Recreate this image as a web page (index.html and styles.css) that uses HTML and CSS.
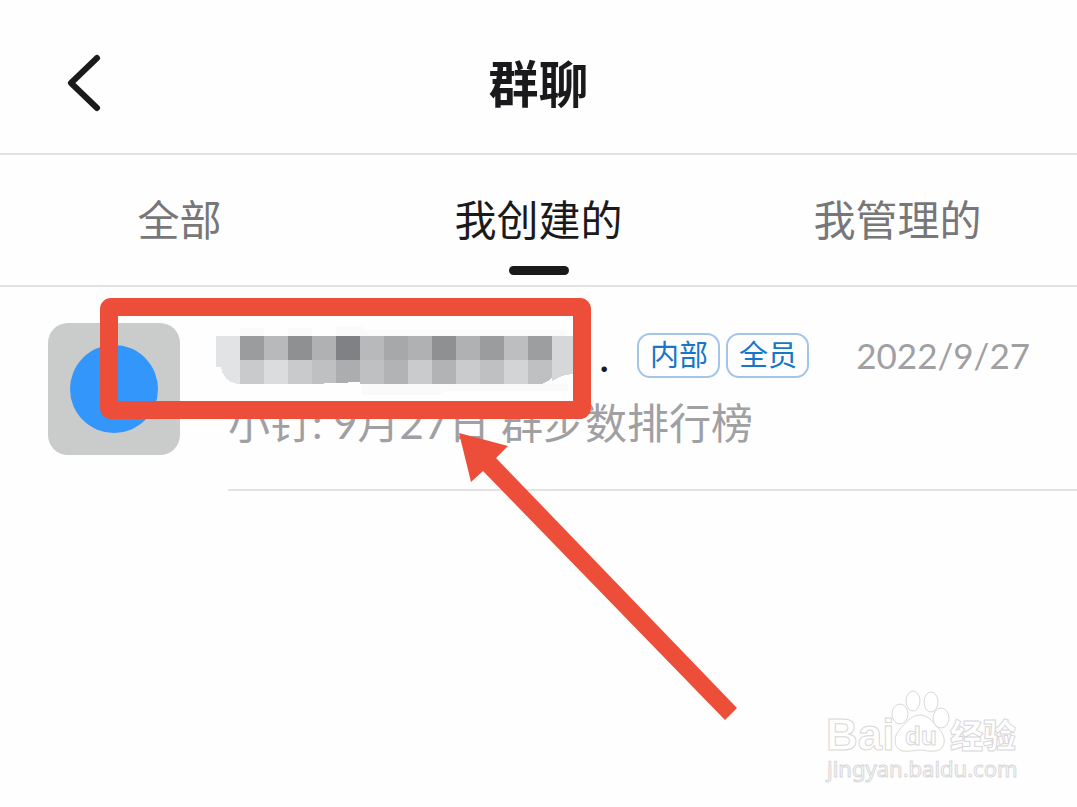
FILE: index.html
```html
<!DOCTYPE html>
<html lang="zh-CN">
<head>
<meta charset="utf-8">
<meta name="viewport" content="width=device-width, initial-scale=1">
<title>群聊</title>
<link rel="stylesheet" href="styles.css">
</head>
<body>
<div class="page">
  <header class="header">
    <button class="back" type="button" aria-label="返回">
      <svg width="40" height="64" viewBox="0 0 40 64" fill="none" stroke="#1a1a1c" stroke-width="6" stroke-linecap="round" stroke-linejoin="round"><path d="M33 8 7 33l26 25"/></svg>
    </button>
    <h1 class="title">群聊</h1>
  </header>
  <nav class="tabs">
    <button class="tab" type="button">全部</button>
    <button class="tab tab-active" type="button">我创建的</button>
    <button class="tab" type="button">我管理的</button>
  </nav>
  <main>
    <article class="chat">
      <div class="avatar"><span class="avatar-dot"></span></div>
      <div class="chat-body">
        <div class="chat-top">
          <svg class="mask" width="372" height="80" viewBox="0 -1 372 80" shape-rendering="crispEdges" aria-hidden="true">
            <g fill="#fafafa">
              <path d="M24 12h24v8H24zM72 12h24v8H72zM120 10h26v10H120zM146 14h204v6H146zM146 68h206v7H230l-10 6h-74z"/>
            </g>
            <path fill="#e1e3e4" d="M0 20h24v48h-3C12 66 6 60 5 51H0z"/>
            <path fill="#9b9c9e" d="M24 20h24v24H24zM264 20h24v24h-24z"/>
            <path fill="#b8b9bb" d="M48 20h24v24H48zM144 20h24v24h-24z"/>
            <path fill="#8f9092" d="M72 20h24v24H72zM216 20h24v24h-24z"/>
            <path fill="#b0b1b3" d="M96 20h24v24H96zM192 20h24v24h-24zM240 20h24v24h-24z"/>
            <path fill="#808184" d="M120 20h24v24h-24z"/>
            <path fill="#a7a8aa" d="M168 20h24v24h-24z"/>
            <path fill="#bdbec0" d="M288 20h24v24h-24z"/>
            <path fill="#9d9ea0" d="M312 20h24v24h-24z"/>
            <path fill="#c8cacc" d="M24 44h24v24H24zM72 44h24v24H72z"/>
            <path fill="#dadcdd" d="M48 44h24v24H48z"/>
            <path fill="#bfc0c2" d="M96 44h24v23l-24 1zM144 44h24v24h-24zM264 44h24v24h-24zM312 44h24v18q-7 6-12 6h-12z"/>
            <path fill="#acadaf" d="M120 44h24v22l-24 1z"/>
            <path fill="#b2b3b5" d="M168 44h24v24h-24zM216 44h24v24h-24z"/>
            <path fill="#cacbcd" d="M192 44h24v24h-24zM240 44h24v24h-24z"/>
            <path fill="#d3d4d6" d="M288 44h24v24h-24z"/>
            <path fill="#d6d7d9" d="M336 20h24v37l-14 3-10 5z"/>
          </svg>
          <span class="ellipsis">.</span>
          <span class="tags"><span class="tag">内部</span><span class="tag">全员</span></span>
          <time class="date" datetime="2022-09-27">2022/9/27</time>
        </div>
        <p class="message">小钉: 9月27日 群步数排行榜</p>
      </div>
    </article>
  </main>

  <svg class="annotation" width="640" height="426" viewBox="0 0 640 426" aria-hidden="true">
    <rect x="9" y="9" width="473" height="103" rx="2" fill="none" stroke="#ec4e39" stroke-width="18" stroke-linejoin="round"/>
    <path fill="#ec4e39" d="M359 135 408 148 396 160 637 410 625 422 383 173 371 184z"/>
  </svg>

  <svg class="watermark" width="204" height="104" viewBox="0 0 204 104" aria-label="Baidu 经验">
    <g fill="#fff" stroke="#d8d8d8" stroke-width="1">
      <text class="wm-logo" x="5" y="63">Bai</text>
      <ellipse cx="79" cy="27" rx="8" ry="10"/>
      <ellipse cx="92" cy="14" rx="7" ry="10"/>
      <ellipse cx="110" cy="15" rx="7" ry="10"/>
      <ellipse cx="120" cy="31" rx="8" ry="10"/>
      <path d="M99 28c9 0 14 9 19 14 8 8 7 21-4 22-6 1-10-1-15-1s-11 2-17 1c-10-2-10-15-3-22 6-6 11-14 20-14z"/>
      <text class="wm-du" x="84" y="58">du</text>
      <text class="wm-cjk" x="129" y="61">经验</text>
      <text class="wm-url" x="6" y="90">jingyan.baidu.com</text>
    </g>
  </svg>
</div>
</body>
</html>
```
FILE: styles.css
```css
* {
  box-sizing: border-box;
}

body {
  margin: 0;
  background: #fefefe;
  color: #1a1a1c;
  font-family: Lato, "Noto Sans CJK SC", sans-serif;
}

button {
  padding: 0;
  border: 0;
  background: none;
  color: inherit;
  font: inherit;
}

.page {
  position: relative;
  min-height: 100vh;
  overflow: hidden;
}

.header {
  display: grid;
  grid-template-columns: 120px 1fr 120px;
  align-items: center;
  height: 155px;
  padding-bottom: 14px;
  border-bottom: 2px solid #e3e3e4;
}

.back {
  display: flex;
  padding: 24px 0 0 64px;
}

.title {
  margin: 28px 0 0;
  font-size: 50px;
  line-height: 60px;
  font-weight: 700;
  text-align: center;
}

.tabs {
  display: grid;
  grid-template-columns: repeat(3, 1fr);
  height: 132px;
  border-bottom: 2px solid #e3e3e4;
}

.tab {
  position: relative;
  font-size: 42px;
  line-height: 60px;
  color: #777779;
}

.tab-active {
  color: #1a1a1c;
}

.tab-active::after {
  content: "";
  position: absolute;
  bottom: 10px;
  left: 50%;
  width: 60px;
  height: 9px;
  margin-left: -30px;
  border-radius: 5px;
  background: #1a1a1c;
}

.chat {
  display: grid;
  grid-template-columns: 132px 1fr;
  gap: 48px;
  padding: 36px 0 0 48px;
}

.avatar {
  display: grid;
  place-items: center;
  height: 132px;
  border-radius: 20px;
  background: #cacbcb;
}

.avatar-dot {
  width: 88px;
  height: 88px;
  border-radius: 50%;
  background: #3296fa;
}

.chat-body {
  padding: 0 47px 40px 0;
  border-bottom: 2px solid #e3e3e4;
}

.chat-top {
  display: flex;
  align-items: center;
  height: 64px;
}

.mask {
  flex: none;
  margin: 0 0 0 -12px;
}

.ellipsis {
  padding-left: 11px;
  font-size: 44px;
  line-height: 48px;
}

.tags {
  display: flex;
  gap: 6px;
  margin-left: 28px;
}

.tag {
  width: 83px;
  height: 45px;
  border: 2px solid #a3c6e8;
  border-radius: 13px;
  color: #1677c8;
  font-size: 29px;
  line-height: 40px;
  text-align: center;
}

.date {
  margin-left: auto;
  color: #a0a0a2;
  font-size: 35px;
  line-height: 48px;
}

.message {
  margin: 12px 0 0;
  color: #a0a0a2;
  font-size: 42px;
  line-height: 48px;
  padding-bottom: 2px;
  white-space: nowrap;
}

.annotation {
  position: absolute;
  top: 298px;
  left: 100px;
}

.watermark {
  position: absolute;
  right: 52px;
  bottom: 16px;
}

.wm-logo {
  font: 700 44px "Liberation Sans", sans-serif;
}

.wm-du {
  font: 700 26px "Liberation Sans", sans-serif;
}

.wm-cjk {
  font: 900 33px "Noto Sans CJK SC", sans-serif;
}

.wm-url {
  font: 400 22px "Noto Sans", sans-serif;
}
```
